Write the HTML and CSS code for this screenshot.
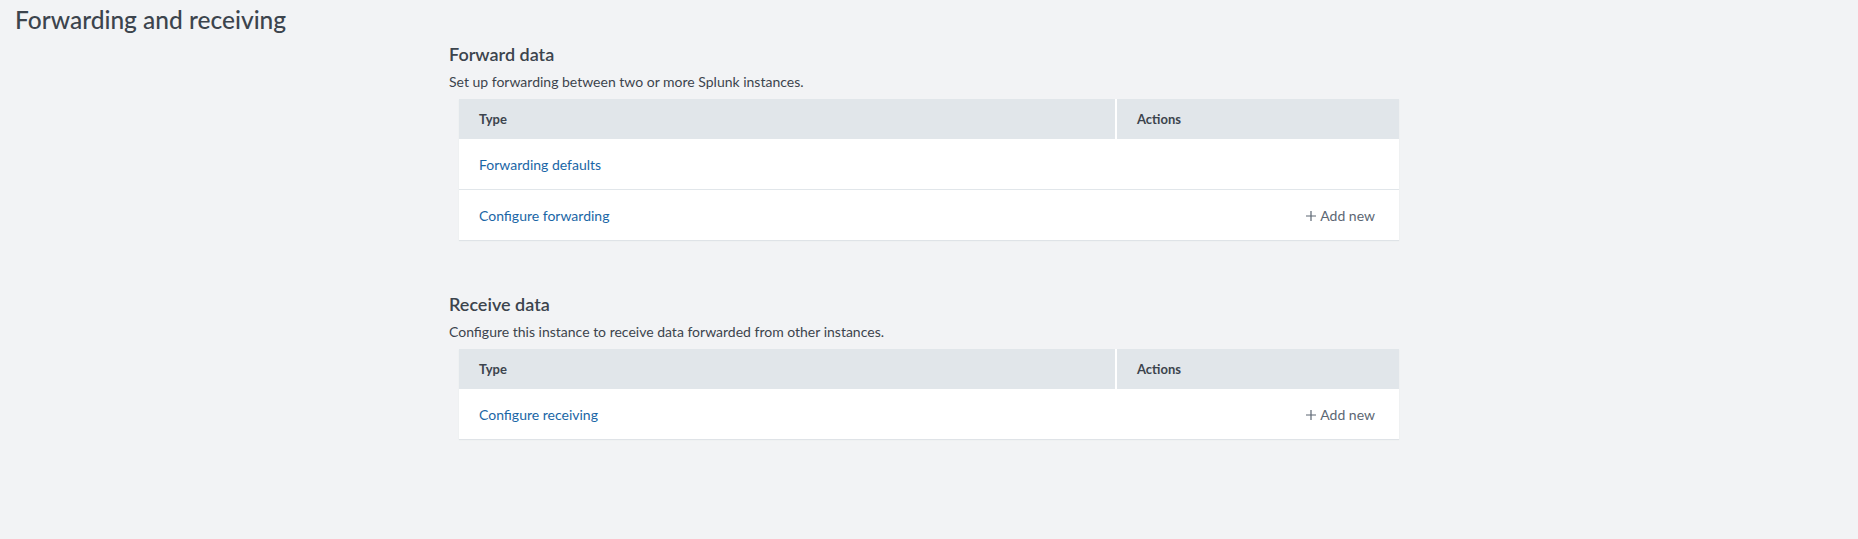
FILE: index.html
```html
<!DOCTYPE html>
<html lang="en">
<head>
    <meta charset="UTF-8">
    <meta name="viewport" content="width=device-width, initial-scale=1.0">
    <title>Forwarding and receiving</title>
    <link rel="stylesheet" href="styles.css">
</head>
<body>
    <h1 class="page-title">Forwarding and receiving</h1>
    <div class="container">
        <div class="section">
            <h2>Forward data</h2>
            <p class="description">Set up forwarding between two or more Splunk instances.</p>
            <table class="types">
                <colgroup>
                    <col class="col-type">
                    <col class="col-actions">
                </colgroup>
                <thead>
                    <tr>
                        <th class="type-head">Type</th>
                        <th>Actions</th>
                    </tr>
                </thead>
                <tbody>
                    <tr>
                        <td><a href="#">Forwarding defaults</a></td>
                        <td></td>
                    </tr>
                    <tr>
                        <td><a href="#">Configure forwarding</a></td>
                        <td class="action">
                            <a href="#" class="add-new"><svg class="plus" width="10" height="10" viewBox="0 0 10 10"><path d="M5 0v10M0 5h10" stroke="currentColor" stroke-width="1.2"/></svg>Add new</a>
                        </td>
                    </tr>
                </tbody>
            </table>
        </div>
        <div class="section">
            <h2>Receive data</h2>
            <p class="description">Configure this instance to receive data forwarded from other instances.</p>
            <table class="types">
                <colgroup>
                    <col class="col-type">
                    <col class="col-actions">
                </colgroup>
                <thead>
                    <tr>
                        <th class="type-head">Type</th>
                        <th>Actions</th>
                    </tr>
                </thead>
                <tbody>
                    <tr>
                        <td><a href="#">Configure receiving</a></td>
                        <td class="action">
                            <a href="#" class="add-new"><svg class="plus" width="10" height="10" viewBox="0 0 10 10"><path d="M5 0v10M0 5h10" stroke="currentColor" stroke-width="1.2"/></svg>Add new</a>
                        </td>
                    </tr>
                </tbody>
            </table>
        </div>
    </div>
</body>
</html>
```

FILE: styles.css
```css
body {
    margin: 0;
    background: #f2f3f5;
    font-family: Lato, "Open Sans", sans-serif;
    color: #3c444d;
}

.page-title {
    margin: 0;
    padding: 5px 15px 0;
    font-size: 24.5px;
    line-height: 30px;
    font-weight: 500;
}

.container {
    width: 960px;
    margin: 0 auto;
}

.section {
    margin-bottom: 52px;
}

h2 {
    margin: 7px 0 0;
    font-size: 18px;
    line-height: 24px;
    font-weight: 600;
}

.description {
    margin: 6px 0 0;
    font-size: 14px;
    line-height: 20px;
}

.types {
    width: 940px;
    margin: 7px 10px 0;
    table-layout: fixed;
    border-collapse: collapse;
    background: #fff;
    font-size: 14px;
    box-shadow: 0 1px 1px #dfe3e7;
}

.col-type {
    width: 657px;
}

.col-actions {
    width: 283px;
}

.types th {
    background: #e1e6ea;
    height: 40px;
    padding: 0 20px;
    text-align: left;
    font-size: 13px;
    font-weight: 700;
}

.types .type-head {
    border-right: 2px solid #fff;
}

.types td {
    height: 50px;
    padding: 0 20px;
    border-top: 1px solid #e1e6ea;
}

.types tbody tr:first-child td {
    border-top: none;
}

.types a {
    color: #1a66a6;
    text-decoration: none;
}

.types .action {
    text-align: right;
    padding-right: 24px;
}

.types .add-new {
    color: #5c6773;
}

.plus {
    margin-right: 4px;
    vertical-align: -0.5px;
}
```
